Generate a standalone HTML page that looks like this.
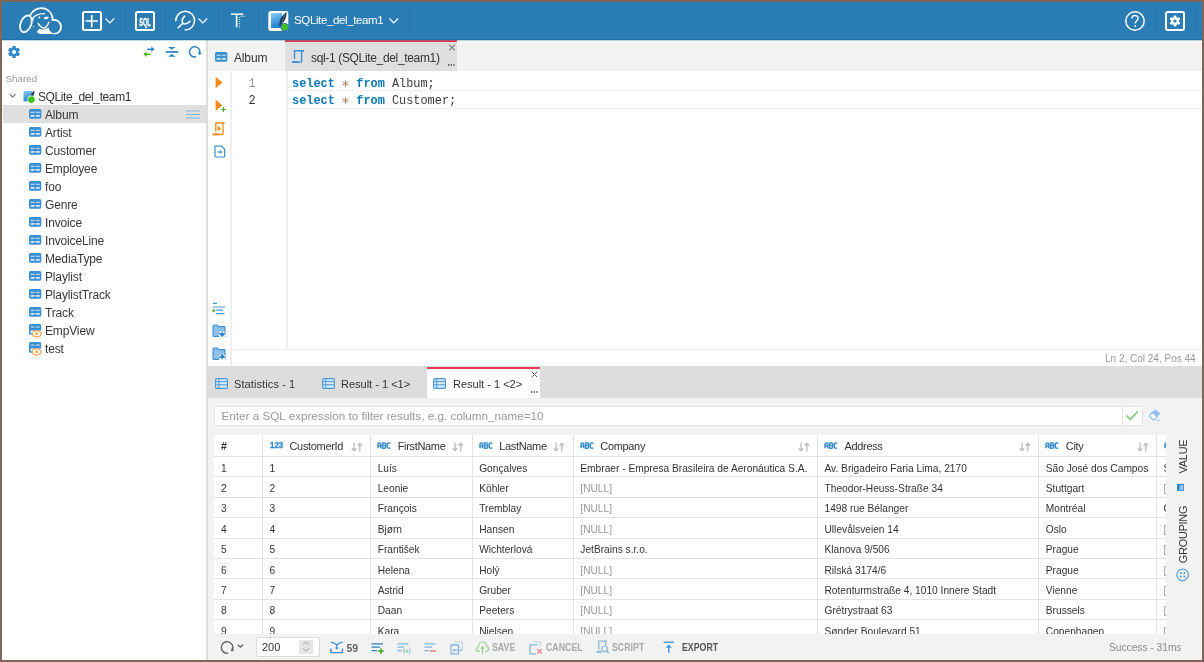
<!DOCTYPE html>
<html><head><meta charset="utf-8">
<style>
*{box-sizing:border-box;margin:0;padding:0}
html,body{width:1204px;height:662px;overflow:hidden;background:#806658;font-family:"Liberation Sans",sans-serif;color:#333;position:relative}
.a{position:absolute}
.t{position:absolute;white-space:nowrap;line-height:1}
#root{position:absolute;left:0;top:0;width:1204px;height:662px;will-change:transform}
svg{position:absolute;overflow:visible}
.sep{position:absolute;top:8px;width:1px;height:25px;background:#2672a8}
.node{position:absolute;left:2px;width:204px;height:18px}
.node svg{left:27px;top:4.6px}
.node .tx{position:absolute;left:43px;top:3px;font-size:12px;letter-spacing:-0.15px;color:#333;white-space:nowrap;line-height:12px}
.code{font-family:"Liberation Mono",monospace;font-size:11.9px;white-space:pre;position:absolute;line-height:16px;color:#3c3c3c}
.kw{color:#0b78b6;font-weight:bold}
.op{color:#b07a45}
.cell{position:absolute;font-size:10.2px;white-space:nowrap;color:#333;line-height:12px}
.null{color:#999}
.vl{position:absolute;width:1px;background:#e3e3e3}
.hl{position:absolute;height:1px;background:#e3e3e3}
.tb{position:absolute;font-size:10px;font-weight:bold;color:#aaa;white-space:nowrap;line-height:10px;top:642.5px;transform:scaleX(0.88);transform-origin:0 0}
</style></head><body><div id="root">
<!-- app bg -->
<div class="a" style="left:2px;top:2px;width:1200px;height:658px;background:#f2f2f2"></div>
<!-- HEADER -->
<div class="a" style="left:2px;top:2px;width:1200px;height:38px;background:#2a7cb4;border-bottom:1px solid #1f6da8"></div>
<!-- logo -->
<svg style="left:16px;top:4px" width="50" height="34" viewBox="0 0 50 34">
 <g fill="none" stroke="#fff" stroke-width="1.8" stroke-linecap="round">
  <ellipse cx="9.9" cy="19.8" rx="5.3" ry="8.7" transform="rotate(22 9.9 19.8)"/>
  <path d="M14.2,11.2 C17,6.2 21,4.2 25.5,4.2 C31.5,4.2 36,8.5 37,16"/>
  <path d="M36.2,16.2 C41,14.8 45,18.5 45,23 C45,27 42,29.6 38.5,29.6"/>
  <path d="M15.5,15.5 C18.5,11.2 22,9.3 28.5,9.6" stroke-width="1.2"/>
  <path d="M22.2,19.6 C24,22.5 26.5,24.2 28.8,24 C30.5,23 32,21 32.8,18.4" stroke-width="1.5"/>
 </g>
 <g fill="#fff">
  <path d="M21.2,27 C21,29 22.8,30 25,30 L39.5,30 C36,29.5 33.5,27.5 32.3,23.5 C30,25.5 26.5,26.2 23.5,24.8 Z"/>
  <path d="M22,13.4 L23.5,12.2 L24.6,13.6 L23,14.6 Z"/>
  <path d="M27.6,14 C28.5,12.6 31,12.3 32.9,13 C32.2,14.8 30.2,15.6 29,15.2 Z"/>
  <path d="M15,14.5 L17.8,13.6 L17.4,17.5 Z"/>
  <path d="M17.2,21.5 L18.4,23.6 L16.8,23 Z"/>
 </g>
</svg>
<!-- plus box -->
<svg style="left:82px;top:11px" width="20" height="20" viewBox="0 0 20 20">
 <rect x="1" y="1" width="18" height="18" rx="1.5" fill="none" stroke="#fff" stroke-width="2"/>
 <path d="M3.5,10 H16 M9.7,4 V16.3" stroke="#fff" stroke-width="1.7"/>
</svg>
<svg style="left:105px;top:18px" width="10" height="6" viewBox="0 0 10 6"><path d="M0.5,0.5 L4.8,5 L9.2,0.5" fill="none" stroke="#fff" stroke-width="1.1"/></svg>
<div class="sep" style="left:125px"></div>
<!-- SQL box -->
<svg style="left:135px;top:11px" width="20" height="20" viewBox="0 0 20 20">
 <rect x="1" y="1" width="18" height="18" rx="1.5" fill="none" stroke="#fff" stroke-width="2"/>
 <text x="10" y="14.6" text-anchor="middle" font-family="Liberation Sans" font-weight="bold" font-size="11" fill="#fff" stroke="#fff" stroke-width="0.35" textLength="11.6" lengthAdjust="spacingAndGlyphs">SQL</text>
</svg>
<div class="sep" style="left:165px"></div>
<!-- search/wrench -->
<svg style="left:174px;top:10px" width="22" height="22" viewBox="0 0 22 22">
 <g fill="none" stroke="#fff" stroke-width="1.6" stroke-linecap="round">
  <path d="M1.8,10.6 A9.4,9.4 0 1 1 11.2,20"/>
  <path d="M4.2,17.8 L8.7,13.2"/>
  <path d="M10.7,6.2 Q7,9.5 8.7,13.2 Q11.5,15.5 16,11.4"/>
 </g>
</svg>
<svg style="left:198px;top:18px" width="10" height="6" viewBox="0 0 10 6"><path d="M0.5,0.5 L4.8,5 L9.2,0.5" fill="none" stroke="#fff" stroke-width="1.1"/></svg>
<div class="sep" style="left:218px"></div>
<!-- T icon -->
<svg style="left:230px;top:12px" width="16" height="17" viewBox="0 0 16 17">
 <rect x="1" y="1.4" width="12.3" height="1.5" fill="#f4f8fb"/>
 <rect x="5.8" y="2.9" width="1.7" height="12.4" fill="#f4f8fb"/>
 <path d="M9.6,5 V16" stroke="#fff" stroke-width="0.9" stroke-dasharray="0.9 1.1"/>
 <path d="M10.5,4.2 H15" stroke="#fff" stroke-width="0.9" stroke-dasharray="1 0.6"/>
</svg>
<div class="sep" style="left:258px"></div>
<!-- db icon -->
<svg style="left:268px;top:11px" width="22" height="22" viewBox="0 0 22 22">
 <defs><linearGradient id="gdb" x1="0" y1="0" x2="0.3" y2="1"><stop offset="0" stop-color="#8fd0f5"/><stop offset="1" stop-color="#1a7fd0"/></linearGradient></defs>
 <rect x="0.3" y="0" width="20" height="20" rx="2.2" fill="#fff"/>
 <rect x="3" y="2" width="11" height="15" fill="url(#gdb)"/>
 <path d="M11.3,14.5 C11.3,9 13.8,4 18.5,1.3 C19,5.8 16.2,11.5 12.2,15 Z" fill="#1b3a58"/>
 <path d="M13.3,14 C14.5,9 16,5 17.6,3" stroke="#8ab" stroke-width="0.5" fill="none"/>
 <circle cx="16.7" cy="16.3" r="4.2" fill="#2a6fb0"/>
 <circle cx="16.7" cy="16.3" r="3.3" fill="#44c21e"/>
</svg>
<div class="t" style="left:294px;top:14px;font-size:11.5px;color:#fff;letter-spacing:-0.37px;line-height:12px">SQLite_del_team1</div>
<svg style="left:389px;top:18px" width="10" height="6" viewBox="0 0 10 6"><path d="M0.5,0.5 L4.8,5 L9.2,0.5" fill="none" stroke="#fff" stroke-width="1.1"/></svg>
<div class="sep" style="left:409px"></div>
<!-- help -->
<svg style="left:1125px;top:11px" width="20" height="20" viewBox="0 0 20 20">
 <circle cx="10" cy="10" r="9.2" fill="none" stroke="#fff" stroke-width="1.5"/>
 <path d="M6.9,7.6 C6.9,5.6 8.3,4.5 10,4.5 C11.8,4.5 13.1,5.7 13.1,7.3 C13.1,9.6 10.2,9.9 10.2,12.6" fill="none" stroke="#fff" stroke-width="1.4"/>
 <rect x="9.4" y="14.2" width="1.6" height="1.6" fill="#fff"/>
</svg>
<div class="sep" style="left:1155px"></div>
<!-- settings -->
<svg style="left:1165px;top:11px" width="20" height="20" viewBox="0 0 20 20">
 <rect x="1" y="1" width="18" height="18" rx="1.5" fill="none" stroke="#fff" stroke-width="1.9"/>
 <g transform="translate(10,10)" fill="#fff">
  <circle r="3.9"/>
  <rect x="-1.35" y="-5.5" width="2.7" height="2.7" rx="0.4" transform="rotate(0)"/><rect x="-1.35" y="-5.5" width="2.7" height="2.7" rx="0.4" transform="rotate(60)"/><rect x="-1.35" y="-5.5" width="2.7" height="2.7" rx="0.4" transform="rotate(120)"/><rect x="-1.35" y="-5.5" width="2.7" height="2.7" rx="0.4" transform="rotate(180)"/><rect x="-1.35" y="-5.5" width="2.7" height="2.7" rx="0.4" transform="rotate(240)"/><rect x="-1.35" y="-5.5" width="2.7" height="2.7" rx="0.4" transform="rotate(300)"/>
  <circle r="1.6" fill="#2a7cb4"/>
 </g>
</svg>
<div class="sep" style="left:1195px"></div>

<!-- SIDEBAR -->
<div class="a" style="left:2px;top:40px;width:204px;height:620px;background:#fff"></div>
<div class="a" style="left:206px;top:40px;width:2px;height:620px;background:#dddddd"></div>
<!-- gear -->
<svg style="left:6.6px;top:45px" width="14" height="14" viewBox="-7 -7 14 14">
 <g fill="#2f89cc">
  <circle r="4.4"/>
  <rect x="-1.7" y="-6" width="3.4" height="3" rx="0.6" transform="rotate(0)"/><rect x="-1.7" y="-6" width="3.4" height="3" rx="0.6" transform="rotate(60)"/><rect x="-1.7" y="-6" width="3.4" height="3" rx="0.6" transform="rotate(120)"/><rect x="-1.7" y="-6" width="3.4" height="3" rx="0.6" transform="rotate(180)"/><rect x="-1.7" y="-6" width="3.4" height="3" rx="0.6" transform="rotate(240)"/><rect x="-1.7" y="-6" width="3.4" height="3" rx="0.6" transform="rotate(300)"/>
 </g>
 <circle r="2" fill="#fff"/>
</svg>
<!-- swap -->
<svg style="left:142px;top:45px" width="14" height="13" viewBox="0 0 14 13">
 <path d="M5.3,4.3 H10.5" stroke="#2a84c6" stroke-width="1.6"/>
 <path d="M9.3,1.4 L12.6,4.3 L9.3,7 Z" fill="#2a84c6"/>
 <path d="M8.5,9.3 H3.2" stroke="#4cba1e" stroke-width="1.6"/>
 <path d="M4.6,6.6 L1.3,9.3 L4.6,12.1 Z" fill="#4cba1e"/>
</svg>
<!-- collapse -->
<svg style="left:165px;top:46px" width="14" height="12" viewBox="0 0 14 12">
 <path d="M3,1 H10.5 L6.75,3.8 Z" fill="#2a84c6"/>
 <rect x="1" y="5" width="12" height="1.8" fill="#2a84c6"/>
 <path d="M3,10.8 H10.5 L6.75,8 Z" fill="#2a84c6"/>
</svg>
<!-- refresh -->
<svg style="left:188px;top:45px" width="14" height="14" viewBox="0 0 14 14">
 <path d="M8.05,11.92 A5.2,5.2 0 1 1 11.72,8.25" fill="none" stroke="#2a84c6" stroke-width="1.5"/><path d="M11.18,10.27 L13.91,8.21 L9.85,7.12 Z" fill="#2a84c6"/>
</svg>
<div class="t" style="left:5.5px;top:74px;font-size:9.9px;color:#999;line-height:10px">Shared</div>
<svg style="left:9px;top:93px" width="8" height="6" viewBox="0 0 8 6"><path d="M0.6,0.8 L3.6,4.2 L6.6,0.8" fill="none" stroke="#777" stroke-width="1.1"/></svg>
<svg style="left:23px;top:90px" width="14" height="14" viewBox="0 0 14 14">
 <defs><linearGradient id="gdb2" x1="0" y1="0" x2="0.3" y2="1"><stop offset="0" stop-color="#8fd0f5"/><stop offset="1" stop-color="#1a7fd0"/></linearGradient></defs>
 <rect x="0.5" y="1" width="8.5" height="10.3" fill="url(#gdb2)"/>
 <path d="M7.2,8.8 C7.3,5.3 8.8,2.4 11.4,0.5 C11.8,3.3 10.4,6.6 8.2,9.2 Z" fill="#1b3a58"/>
 <circle cx="8.4" cy="9.6" r="4" fill="#fff"/>
 <circle cx="8.4" cy="9.6" r="3.4" fill="#44c21e"/>
</svg>
<div class="t" style="left:38px;top:91px;font-size:12px;color:#333;letter-spacing:-0.4px;line-height:12px">SQLite_del_team1</div>
<!-- highlight -->
<div class="a" style="left:3px;top:105px;width:203px;height:18px;background:#dfdfdf"></div>
<svg style="left:186px;top:109.5px" width="14" height="10" viewBox="0 0 14 10"><path d="M0,1 H14 M0,4.5 H14 M0,8 H14" stroke="#82b4dc" stroke-width="1"/></svg>
<svg style="left:29px;top:109.2px" width="12.5" height="10" viewBox="0 0 12.5 10"><rect x="0" y="0" width="12.3" height="9.7" rx="1.6" fill="#3a8fd1"/><rect x="1.6" y="2.7" width="4" height="1.4" fill="#a9d2f2"/><rect x="6.8" y="2.7" width="4" height="1.4" fill="#a9d2f2"/><rect x="1.6" y="6.2" width="4" height="1.4" fill="#fff"/><rect x="6.8" y="6.2" width="4" height="1.4" fill="#fff"/></svg>
<div class="t" style="left:45px;top:108.5px;font-size:12px;color:#383838;letter-spacing:-0.15px;line-height:12px">Album</div>
<svg style="left:29px;top:127.2px" width="12.5" height="10" viewBox="0 0 12.5 10"><rect x="0" y="0" width="12.3" height="9.7" rx="1.6" fill="#3a8fd1"/><rect x="1.6" y="2.7" width="4" height="1.4" fill="#a9d2f2"/><rect x="6.8" y="2.7" width="4" height="1.4" fill="#a9d2f2"/><rect x="1.6" y="6.2" width="4" height="1.4" fill="#fff"/><rect x="6.8" y="6.2" width="4" height="1.4" fill="#fff"/></svg>
<div class="t" style="left:45px;top:126.5px;font-size:12px;color:#383838;letter-spacing:-0.15px;line-height:12px">Artist</div>
<svg style="left:29px;top:145.2px" width="12.5" height="10" viewBox="0 0 12.5 10"><rect x="0" y="0" width="12.3" height="9.7" rx="1.6" fill="#3a8fd1"/><rect x="1.6" y="2.7" width="4" height="1.4" fill="#a9d2f2"/><rect x="6.8" y="2.7" width="4" height="1.4" fill="#a9d2f2"/><rect x="1.6" y="6.2" width="4" height="1.4" fill="#fff"/><rect x="6.8" y="6.2" width="4" height="1.4" fill="#fff"/></svg>
<div class="t" style="left:45px;top:144.5px;font-size:12px;color:#383838;letter-spacing:-0.15px;line-height:12px">Customer</div>
<svg style="left:29px;top:163.2px" width="12.5" height="10" viewBox="0 0 12.5 10"><rect x="0" y="0" width="12.3" height="9.7" rx="1.6" fill="#3a8fd1"/><rect x="1.6" y="2.7" width="4" height="1.4" fill="#a9d2f2"/><rect x="6.8" y="2.7" width="4" height="1.4" fill="#a9d2f2"/><rect x="1.6" y="6.2" width="4" height="1.4" fill="#fff"/><rect x="6.8" y="6.2" width="4" height="1.4" fill="#fff"/></svg>
<div class="t" style="left:45px;top:162.5px;font-size:12px;color:#383838;letter-spacing:-0.15px;line-height:12px">Employee</div>
<svg style="left:29px;top:181.2px" width="12.5" height="10" viewBox="0 0 12.5 10"><rect x="0" y="0" width="12.3" height="9.7" rx="1.6" fill="#3a8fd1"/><rect x="1.6" y="2.7" width="4" height="1.4" fill="#a9d2f2"/><rect x="6.8" y="2.7" width="4" height="1.4" fill="#a9d2f2"/><rect x="1.6" y="6.2" width="4" height="1.4" fill="#fff"/><rect x="6.8" y="6.2" width="4" height="1.4" fill="#fff"/></svg>
<div class="t" style="left:45px;top:180.5px;font-size:12px;color:#383838;letter-spacing:-0.15px;line-height:12px">foo</div>
<svg style="left:29px;top:199.2px" width="12.5" height="10" viewBox="0 0 12.5 10"><rect x="0" y="0" width="12.3" height="9.7" rx="1.6" fill="#3a8fd1"/><rect x="1.6" y="2.7" width="4" height="1.4" fill="#a9d2f2"/><rect x="6.8" y="2.7" width="4" height="1.4" fill="#a9d2f2"/><rect x="1.6" y="6.2" width="4" height="1.4" fill="#fff"/><rect x="6.8" y="6.2" width="4" height="1.4" fill="#fff"/></svg>
<div class="t" style="left:45px;top:198.5px;font-size:12px;color:#383838;letter-spacing:-0.15px;line-height:12px">Genre</div>
<svg style="left:29px;top:217.2px" width="12.5" height="10" viewBox="0 0 12.5 10"><rect x="0" y="0" width="12.3" height="9.7" rx="1.6" fill="#3a8fd1"/><rect x="1.6" y="2.7" width="4" height="1.4" fill="#a9d2f2"/><rect x="6.8" y="2.7" width="4" height="1.4" fill="#a9d2f2"/><rect x="1.6" y="6.2" width="4" height="1.4" fill="#fff"/><rect x="6.8" y="6.2" width="4" height="1.4" fill="#fff"/></svg>
<div class="t" style="left:45px;top:216.5px;font-size:12px;color:#383838;letter-spacing:-0.15px;line-height:12px">Invoice</div>
<svg style="left:29px;top:235.2px" width="12.5" height="10" viewBox="0 0 12.5 10"><rect x="0" y="0" width="12.3" height="9.7" rx="1.6" fill="#3a8fd1"/><rect x="1.6" y="2.7" width="4" height="1.4" fill="#a9d2f2"/><rect x="6.8" y="2.7" width="4" height="1.4" fill="#a9d2f2"/><rect x="1.6" y="6.2" width="4" height="1.4" fill="#fff"/><rect x="6.8" y="6.2" width="4" height="1.4" fill="#fff"/></svg>
<div class="t" style="left:45px;top:234.5px;font-size:12px;color:#383838;letter-spacing:-0.15px;line-height:12px">InvoiceLine</div>
<svg style="left:29px;top:253.2px" width="12.5" height="10" viewBox="0 0 12.5 10"><rect x="0" y="0" width="12.3" height="9.7" rx="1.6" fill="#3a8fd1"/><rect x="1.6" y="2.7" width="4" height="1.4" fill="#a9d2f2"/><rect x="6.8" y="2.7" width="4" height="1.4" fill="#a9d2f2"/><rect x="1.6" y="6.2" width="4" height="1.4" fill="#fff"/><rect x="6.8" y="6.2" width="4" height="1.4" fill="#fff"/></svg>
<div class="t" style="left:45px;top:252.5px;font-size:12px;color:#383838;letter-spacing:-0.15px;line-height:12px">MediaType</div>
<svg style="left:29px;top:271.2px" width="12.5" height="10" viewBox="0 0 12.5 10"><rect x="0" y="0" width="12.3" height="9.7" rx="1.6" fill="#3a8fd1"/><rect x="1.6" y="2.7" width="4" height="1.4" fill="#a9d2f2"/><rect x="6.8" y="2.7" width="4" height="1.4" fill="#a9d2f2"/><rect x="1.6" y="6.2" width="4" height="1.4" fill="#fff"/><rect x="6.8" y="6.2" width="4" height="1.4" fill="#fff"/></svg>
<div class="t" style="left:45px;top:270.5px;font-size:12px;color:#383838;letter-spacing:-0.15px;line-height:12px">Playlist</div>
<svg style="left:29px;top:289.2px" width="12.5" height="10" viewBox="0 0 12.5 10"><rect x="0" y="0" width="12.3" height="9.7" rx="1.6" fill="#3a8fd1"/><rect x="1.6" y="2.7" width="4" height="1.4" fill="#a9d2f2"/><rect x="6.8" y="2.7" width="4" height="1.4" fill="#a9d2f2"/><rect x="1.6" y="6.2" width="4" height="1.4" fill="#fff"/><rect x="6.8" y="6.2" width="4" height="1.4" fill="#fff"/></svg>
<div class="t" style="left:45px;top:288.5px;font-size:12px;color:#383838;letter-spacing:-0.15px;line-height:12px">PlaylistTrack</div>
<svg style="left:29px;top:307.2px" width="12.5" height="10" viewBox="0 0 12.5 10"><rect x="0" y="0" width="12.3" height="9.7" rx="1.6" fill="#3a8fd1"/><rect x="1.6" y="2.7" width="4" height="1.4" fill="#a9d2f2"/><rect x="6.8" y="2.7" width="4" height="1.4" fill="#a9d2f2"/><rect x="1.6" y="6.2" width="4" height="1.4" fill="#fff"/><rect x="6.8" y="6.2" width="4" height="1.4" fill="#fff"/></svg>
<div class="t" style="left:45px;top:306.5px;font-size:12px;color:#383838;letter-spacing:-0.15px;line-height:12px">Track</div>
<svg style="left:28.6px;top:323.8px" width="14" height="14" viewBox="0 0 14 14"><path d="M0,1.6 Q0,0 1.6,0 H10.6 Q12.2,0 12.2,1.6 V6.4 H1.6 V8.6 Q1.6,9.4 2.6,9.4 H3.5 V10.8 H1.6 Q0,10.8 0,9.2 Z" fill="#3a8fd1"/><rect x="1.6" y="2.4" width="4" height="1.3" fill="#a9d2f2"/><rect x="6.8" y="2.4" width="4" height="1.3" fill="#a9d2f2"/><ellipse cx="7.7" cy="9.8" rx="4.4" ry="3.1" fill="#fff" stroke="#f39a3a" stroke-width="1.1"/><circle cx="7.7" cy="9.8" r="1.3" fill="#f39a3a"/></svg>
<div class="t" style="left:45px;top:324.5px;font-size:12px;color:#383838;letter-spacing:-0.15px;line-height:12px">EmpView</div>
<svg style="left:28.6px;top:341.8px" width="14" height="14" viewBox="0 0 14 14"><path d="M0,1.6 Q0,0 1.6,0 H10.6 Q12.2,0 12.2,1.6 V6.4 H1.6 V8.6 Q1.6,9.4 2.6,9.4 H3.5 V10.8 H1.6 Q0,10.8 0,9.2 Z" fill="#3a8fd1"/><rect x="1.6" y="2.4" width="4" height="1.3" fill="#a9d2f2"/><rect x="6.8" y="2.4" width="4" height="1.3" fill="#a9d2f2"/><ellipse cx="7.7" cy="9.8" rx="4.4" ry="3.1" fill="#fff" stroke="#f39a3a" stroke-width="1.1"/><circle cx="7.7" cy="9.8" r="1.3" fill="#f39a3a"/></svg>
<div class="t" style="left:45px;top:342.5px;font-size:12px;color:#383838;letter-spacing:-0.15px;line-height:12px">test</div>
<!-- EDITOR TABS -->
<div class="a" style="left:208px;top:40px;width:994px;height:31px;background:#f2f2f2"></div>
<div class="a" style="left:208px;top:41px;width:994px;height:1px;background:#fcfaf8"></div>
<svg style="left:215px;top:51.5px" width="12.5" height="10" viewBox="0 0 12.5 10"><rect x="0" y="0" width="12.3" height="9.7" rx="1.6" fill="#3a8fd1"/><rect x="1.6" y="2.7" width="4" height="1.4" fill="#a9d2f2"/><rect x="6.8" y="2.7" width="4" height="1.4" fill="#a9d2f2"/><rect x="1.6" y="6.2" width="4" height="1.4" fill="#fff"/><rect x="6.8" y="6.2" width="4" height="1.4" fill="#fff"/></svg>
<div class="t" style="left:234px;top:52px;font-size:12px;color:#333;letter-spacing:-0.15px;line-height:12px">Album</div>
<div class="a" style="left:285px;top:40px;width:172px;height:31px;background:#dfdfdf;border-top:2px solid #e33d4e"></div>
<svg style="left:291px;top:49px" width="14" height="15" viewBox="0 0 14 15">
 <path d="M3.5,10 V1.8 H12.4 M10.6,1.8 V12.2 Q10.6,13.1 9.7,13.1 H1.3" fill="none" stroke="#3d8fd6" stroke-width="1.4"/>
 <circle cx="12.2" cy="2" r="1" fill="#3d8fd6"/>
 <rect x="1.2" y="12.2" width="6" height="1.8" fill="#3d8fd6"/>
</svg>
<div class="t" style="left:311px;top:52px;font-size:12px;color:#333;letter-spacing:-0.34px;line-height:12px">sql-1 (SQLite_del_team1)</div>
<svg style="left:447.5px;top:44px" width="8" height="7" viewBox="0 0 8 7"><path d="M1,0.6 L7,6.4 M7,0.6 L1,6.4" stroke="#555" stroke-width="1"/></svg>
<svg style="left:448px;top:64px" width="7" height="2" viewBox="0 0 7 2"><path d="M0,1 H1.4 M2.6,1 H4 M5.2,1 H6.6" stroke="#444" stroke-width="1.4"/></svg>
<!-- EDITOR -->
<div class="a" style="left:208px;top:71px;width:994px;height:295px;background:#fff"></div>
<div class="a" style="left:230px;top:71px;width:2px;height:295px;background:#efefef"></div>
<div class="a" style="left:286px;top:71px;width:2px;height:278px;background:#efefef"></div>
<div class="a" style="left:288px;top:89.5px;width:914px;height:1px;background:#f0f0f0"></div>
<div class="a" style="left:288px;top:107.5px;width:914px;height:1px;background:#f0f0f0"></div>
<div class="code" style="left:248.5px;top:76px;color:#999">1</div>
<div class="code" style="left:248.5px;top:92.5px;color:#333">2</div>
<div class="code" style="left:292px;top:76px"><span class="kw">select</span>   <span class="kw">from</span> Album;</div>
<div class="code" style="left:292px;top:92.5px"><span class="kw">select</span>   <span class="kw">from</span> Customer;</div>
<svg style="left:341.8px;top:79.9px" width="7" height="7" viewBox="0 0 7 7"><g stroke="#bb8c6a" stroke-width="1" stroke-linecap="round"><path d="M3.5,0.5 V6.5"/><path d="M0.9,2 L6.1,5"/><path d="M6.1,2 L0.9,5"/></g></svg>
<svg style="left:341.8px;top:96.60000000000001px" width="7" height="7" viewBox="0 0 7 7"><g stroke="#bb8c6a" stroke-width="1" stroke-linecap="round"><path d="M3.5,0.5 V6.5"/><path d="M0.9,2 L6.1,5"/><path d="M6.1,2 L0.9,5"/></g></svg>
<div class="a" style="left:232px;top:348.5px;width:970px;height:1px;background:#ececec"></div>
<div class="t" style="left:1105px;top:353.5px;font-size:10px;color:#999;line-height:10px">Ln 2, Col 24, Pos 44</div>
<!-- gutter icons -->
<svg style="left:215px;top:76px" width="8" height="13" viewBox="0 0 8 13"><path d="M0.6,0.8 L7.4,6.5 L0.6,12.2 Z" fill="#f38b1a"/></svg>
<svg style="left:215px;top:99px" width="12" height="14" viewBox="0 0 12 14"><path d="M0.6,0.5 L7.2,6.3 L0.6,12.1 Z" fill="#f38b1a"/><path d="M8.4,8 V13 M5.9,10.5 H10.9" stroke="#4cb02a" stroke-width="1.2"/></svg>
<svg style="left:212px;top:121px" width="14" height="15" viewBox="0 0 14 15">
 <path d="M3.8,10.5 V2 H12.6 M11,2 V12.5 Q11,13.5 10,13.5 H1" fill="none" stroke="#f38b1a" stroke-width="1.3"/>
 <rect x="0.8" y="12.4" width="6" height="1.8" fill="#f38b1a"/>
 <path d="M5.5,4.6 L9,7.5 L5.5,10.3 Z" fill="#f38b1a"/>
</svg>
<svg style="left:213.5px;top:145px" width="12" height="13" viewBox="0 0 12 13">
 <path d="M1,1.2 H7.5 L10.6,4.3 V11.2 Q10.6,12 9.8,12 H1.8 Q1,12 1,11.2 Z" fill="none" stroke="#3d8fd6" stroke-width="1.2"/>
 <path d="M3.4,7 H7.4" stroke="#3d8fd6" stroke-width="1.2"/><path d="M6.2,5.1 L8.4,7 L6.2,8.9 Z" fill="#3d8fd6"/>
</svg>
<svg style="left:212px;top:301px" width="14" height="15" viewBox="0 0 14 15">
 <path d="M1,2.3 H5 M1,6 H13 M4,9.2 H11 M4,12.6 H12.5" stroke="#4a98d8" stroke-width="1.2"/>
 <path d="M0.6,7.4 L3.8,9.6 L0.6,11.8 Z" fill="#4cb02a"/>
</svg>
<svg style="left:212px;top:324px" width="14" height="14" viewBox="0 0 14 14">
 <path d="M1,2 Q1,1 2,1 H5.2 L6.6,2.6 H12.3 Q13,2.6 13,3.4 V12.4 H2 Q1,12.4 1,11.4 Z" fill="#8cc0ea" stroke="#3d8fd6" stroke-width="1.1"/>
 <circle cx="10.2" cy="10.6" r="3.4" fill="#fff"/>
 <path d="M10.2,7.6 V11.6 M8,9.6 L10.2,12.2 L12.4,9.6 Z" stroke="#2f86d0" stroke-width="1.3" fill="#2f86d0"/>
</svg>
<svg style="left:212px;top:347px" width="14" height="14" viewBox="0 0 14 14">
 <path d="M1,2 Q1,1 2,1 H5.2 L6.6,2.6 H12.3 Q13,2.6 13,3.4 V12.4 H2 Q1,12.4 1,11.4 Z" fill="#8cc0ea" stroke="#3d8fd6" stroke-width="1.1"/>
 <circle cx="10.2" cy="10.6" r="3.4" fill="#fff"/>
 <path d="M10.2,12.6 V8.6 M8,10.4 L10.2,7.8 L12.4,10.4 Z" stroke="#2f86d0" stroke-width="1.3" fill="#2f86d0"/>
</svg>

<!--RESULTS--><div class="a" style="left:208px;top:366px;width:994px;height:32px;background:#dddddd"></div>
<div class="a" style="left:208px;top:398px;width:994px;height:262px;background:#f2f2f2"></div>
<svg style="left:214.5px;top:378px" width="13" height="11" viewBox="0 0 13 11"><rect x="0.6" y="0.6" width="11.8" height="9.8" rx="1" fill="#d9ebf8" stroke="#4a98d8" stroke-width="1.1"/><path d="M0.6,3.6 H12.4 M0.6,6.8 H12.4 M3.8,0.6 V10.4" stroke="#4a98d8" stroke-width="1"/></svg>
<div class="t" style="left:234px;top:379px;font-size:11px;letter-spacing:0.1px;color:#333;line-height:11px">Statistics - 1</div>
<svg style="left:321.5px;top:378px" width="13" height="11" viewBox="0 0 13 11"><rect x="0.6" y="0.6" width="11.8" height="9.8" rx="1" fill="#d9ebf8" stroke="#4a98d8" stroke-width="1.1"/><path d="M0.6,3.6 H12.4 M0.6,6.8 H12.4 M3.8,0.6 V10.4" stroke="#4a98d8" stroke-width="1"/></svg>
<div class="t" style="left:341px;top:379px;font-size:11px;color:#333;line-height:11px">Result - 1 &lt;1&gt;</div>
<div class="a" style="left:426.5px;top:367px;width:113.5px;height:31px;background:#fff;border-top:2px solid #e33d4e"></div>
<svg style="left:433px;top:378px" width="13" height="11" viewBox="0 0 13 11"><rect x="0.6" y="0.6" width="11.8" height="9.8" rx="1" fill="#d9ebf8" stroke="#4a98d8" stroke-width="1.1"/><path d="M0.6,3.6 H12.4 M0.6,6.8 H12.4 M3.8,0.6 V10.4" stroke="#4a98d8" stroke-width="1"/></svg>
<div class="t" style="left:453px;top:379px;font-size:11px;color:#333;line-height:11px">Result - 1 &lt;2&gt;</div>
<svg style="left:530.5px;top:371px" width="7" height="7" viewBox="0 0 7 7"><path d="M0.8,0.8 L6.2,6.2 M6.2,0.8 L0.8,6.2" stroke="#555" stroke-width="1"/></svg>
<svg style="left:531px;top:391px" width="7" height="2" viewBox="0 0 7 2"><path d="M0,1 H1.4 M2.6,1 H4 M5.2,1 H6.6" stroke="#444" stroke-width="1.4"/></svg>
<div class="a" style="left:214px;top:406px;width:929px;height:20px;background:#fff;border:1px solid #e2e2e2;border-radius:2px"></div>
<div class="a" style="left:1122px;top:407px;width:1px;height:18px;background:#e2e2e2"></div>
<div class="t" style="left:221.5px;top:410px;font-size:11.7px;color:#999;line-height:11px">Enter a SQL expression to filter results, e.g. column_name=10</div>
<svg style="left:1125px;top:409px" width="14" height="13" viewBox="0 0 14 13"><path d="M1.5,6.5 L5.2,10.5 L12.8,2.5" fill="none" stroke="#80cc80" stroke-width="1.8"/></svg>
<svg style="left:1148px;top:408px" width="14" height="14" viewBox="0 0 14 14"><path d="M7.5,1.2 L12.2,5.7 L7,10.8 L2.4,6.3 Z" fill="#8ec2ec"/><path d="M4.6,4.2 L9.3,8.6 L6.3,11.5 Q5.6,12.1 4.9,11.5 L1.8,8.5 Q1.2,7.8 1.8,7.1 Z" fill="#fff" stroke="#8ec2ec" stroke-width="1.2"/><path d="M8.5,12.4 H11.5" stroke="#8ec2ec" stroke-width="1"/></svg>
<div class="a" style="left:214px;top:434.5px;width:952px;height:199.5px;background:#fff;border-radius:3px;overflow:hidden" id="tbl"></div>
<div class="vl" style="left:262.0px;top:434.5px;height:199.5px"></div>
<div class="vl" style="left:370.2px;top:434.5px;height:199.5px"></div>
<div class="vl" style="left:471.7px;top:434.5px;height:199.5px"></div>
<div class="vl" style="left:572.8px;top:434.5px;height:199.5px"></div>
<div class="vl" style="left:817.0px;top:434.5px;height:199.5px"></div>
<div class="vl" style="left:1038.3px;top:434.5px;height:199.5px"></div>
<div class="vl" style="left:1156.0px;top:434.5px;height:199.5px"></div>
<div class="hl" style="left:214px;top:456.0px;width:952px"></div>
<div class="hl" style="left:214px;top:476.40px;width:952px"></div>
<div class="hl" style="left:214px;top:496.80px;width:952px"></div>
<div class="hl" style="left:214px;top:517.20px;width:952px"></div>
<div class="hl" style="left:214px;top:537.60px;width:952px"></div>
<div class="hl" style="left:214px;top:558.00px;width:952px"></div>
<div class="hl" style="left:214px;top:578.40px;width:952px"></div>
<div class="hl" style="left:214px;top:598.80px;width:952px"></div>
<div class="hl" style="left:214px;top:619.20px;width:952px"></div>
<div class="t" style="left:221px;top:440.5px;font-size:10.5px;font-weight:bold;color:#333;line-height:11px">#</div>
<svg style="left:269.5px;top:442px" width="14" height="7" viewBox="0 0 14 7"><text x="0" y="6.3" font-family="Liberation Sans" font-weight="bold" font-size="8.6" fill="#3a8fd1" stroke="#3a8fd1" stroke-width="0.35" textLength="13.3" lengthAdjust="spacingAndGlyphs">123</text></svg>
<div class="t" style="left:289.5px;top:440.5px;font-size:11px;letter-spacing:-0.33px;color:#333;line-height:11px">CustomerId</div>
<svg style="left:350.7px;top:441.5px" width="12" height="10" viewBox="0 0 12 10"><path d="M3,0.5 V8.5 M0.8,6.3 L3,8.8 L5.2,6.3" fill="none" stroke="#bdbdbd" stroke-width="1.35"/><path d="M8.8,9.5 V1.5 M6.6,3.7 L8.8,1.2 L11,3.7" fill="none" stroke="#bdbdbd" stroke-width="1.35"/></svg>
<svg style="left:377.2px;top:442px" width="14" height="7" viewBox="0 0 14 7"><g fill="none" stroke="#3a8fd1" stroke-width="1.5"><path d="M1,6.2 V2.4 Q1,1 2.4,1 Q3.8,1 3.8,2.4 V6.2 M1,4 H3.8"/><path d="M5.6,1 H7.4 Q8.7,1 8.7,2.3 V4.9 Q8.7,6.2 7.4,6.2 H5.6 Z M5.6,3.6 H8"/><path d="M13.1,1.6 Q12.8,1 11.7,1 Q10.2,1 10.2,2.4 V4.8 Q10.2,6.2 11.7,6.2 Q12.8,6.2 13.1,5.6"/></g></svg>
<div class="t" style="left:397.7px;top:440.5px;font-size:11px;letter-spacing:-0.33px;color:#333;line-height:11px">FirstName</div>
<svg style="left:452.2px;top:441.5px" width="12" height="10" viewBox="0 0 12 10"><path d="M3,0.5 V8.5 M0.8,6.3 L3,8.8 L5.2,6.3" fill="none" stroke="#bdbdbd" stroke-width="1.35"/><path d="M8.8,9.5 V1.5 M6.6,3.7 L8.8,1.2 L11,3.7" fill="none" stroke="#bdbdbd" stroke-width="1.35"/></svg>
<svg style="left:478.7px;top:442px" width="14" height="7" viewBox="0 0 14 7"><g fill="none" stroke="#3a8fd1" stroke-width="1.5"><path d="M1,6.2 V2.4 Q1,1 2.4,1 Q3.8,1 3.8,2.4 V6.2 M1,4 H3.8"/><path d="M5.6,1 H7.4 Q8.7,1 8.7,2.3 V4.9 Q8.7,6.2 7.4,6.2 H5.6 Z M5.6,3.6 H8"/><path d="M13.1,1.6 Q12.8,1 11.7,1 Q10.2,1 10.2,2.4 V4.8 Q10.2,6.2 11.7,6.2 Q12.8,6.2 13.1,5.6"/></g></svg>
<div class="t" style="left:499.2px;top:440.5px;font-size:11px;letter-spacing:-0.33px;color:#333;line-height:11px">LastName</div>
<svg style="left:553.3px;top:441.5px" width="12" height="10" viewBox="0 0 12 10"><path d="M3,0.5 V8.5 M0.8,6.3 L3,8.8 L5.2,6.3" fill="none" stroke="#bdbdbd" stroke-width="1.35"/><path d="M8.8,9.5 V1.5 M6.6,3.7 L8.8,1.2 L11,3.7" fill="none" stroke="#bdbdbd" stroke-width="1.35"/></svg>
<svg style="left:579.8px;top:442px" width="14" height="7" viewBox="0 0 14 7"><g fill="none" stroke="#3a8fd1" stroke-width="1.5"><path d="M1,6.2 V2.4 Q1,1 2.4,1 Q3.8,1 3.8,2.4 V6.2 M1,4 H3.8"/><path d="M5.6,1 H7.4 Q8.7,1 8.7,2.3 V4.9 Q8.7,6.2 7.4,6.2 H5.6 Z M5.6,3.6 H8"/><path d="M13.1,1.6 Q12.8,1 11.7,1 Q10.2,1 10.2,2.4 V4.8 Q10.2,6.2 11.7,6.2 Q12.8,6.2 13.1,5.6"/></g></svg>
<div class="t" style="left:600.3px;top:440.5px;font-size:11px;letter-spacing:-0.33px;color:#333;line-height:11px">Company</div>
<svg style="left:797.5px;top:441.5px" width="12" height="10" viewBox="0 0 12 10"><path d="M3,0.5 V8.5 M0.8,6.3 L3,8.8 L5.2,6.3" fill="none" stroke="#bdbdbd" stroke-width="1.35"/><path d="M8.8,9.5 V1.5 M6.6,3.7 L8.8,1.2 L11,3.7" fill="none" stroke="#bdbdbd" stroke-width="1.35"/></svg>
<svg style="left:824.0px;top:442px" width="14" height="7" viewBox="0 0 14 7"><g fill="none" stroke="#3a8fd1" stroke-width="1.5"><path d="M1,6.2 V2.4 Q1,1 2.4,1 Q3.8,1 3.8,2.4 V6.2 M1,4 H3.8"/><path d="M5.6,1 H7.4 Q8.7,1 8.7,2.3 V4.9 Q8.7,6.2 7.4,6.2 H5.6 Z M5.6,3.6 H8"/><path d="M13.1,1.6 Q12.8,1 11.7,1 Q10.2,1 10.2,2.4 V4.8 Q10.2,6.2 11.7,6.2 Q12.8,6.2 13.1,5.6"/></g></svg>
<div class="t" style="left:844.5px;top:440.5px;font-size:11px;letter-spacing:-0.33px;color:#333;line-height:11px">Address</div>
<svg style="left:1018.8px;top:441.5px" width="12" height="10" viewBox="0 0 12 10"><path d="M3,0.5 V8.5 M0.8,6.3 L3,8.8 L5.2,6.3" fill="none" stroke="#bdbdbd" stroke-width="1.35"/><path d="M8.8,9.5 V1.5 M6.6,3.7 L8.8,1.2 L11,3.7" fill="none" stroke="#bdbdbd" stroke-width="1.35"/></svg>
<svg style="left:1045.3px;top:442px" width="14" height="7" viewBox="0 0 14 7"><g fill="none" stroke="#3a8fd1" stroke-width="1.5"><path d="M1,6.2 V2.4 Q1,1 2.4,1 Q3.8,1 3.8,2.4 V6.2 M1,4 H3.8"/><path d="M5.6,1 H7.4 Q8.7,1 8.7,2.3 V4.9 Q8.7,6.2 7.4,6.2 H5.6 Z M5.6,3.6 H8"/><path d="M13.1,1.6 Q12.8,1 11.7,1 Q10.2,1 10.2,2.4 V4.8 Q10.2,6.2 11.7,6.2 Q12.8,6.2 13.1,5.6"/></g></svg>
<div class="t" style="left:1065.8px;top:440.5px;font-size:11px;letter-spacing:-0.33px;color:#333;line-height:11px">City</div>
<svg style="left:1136.5px;top:441.5px" width="12" height="10" viewBox="0 0 12 10"><path d="M3,0.5 V8.5 M0.8,6.3 L3,8.8 L5.2,6.3" fill="none" stroke="#bdbdbd" stroke-width="1.35"/><path d="M8.8,9.5 V1.5 M6.6,3.7 L8.8,1.2 L11,3.7" fill="none" stroke="#bdbdbd" stroke-width="1.35"/></svg>
<svg style="left:1163.5px;top:442px" width="14" height="7" viewBox="0 0 14 7"><g fill="none" stroke="#3a8fd1" stroke-width="1.5"><path d="M1,6.2 V2.4 Q1,1 2.4,1 Q3.8,1 3.8,2.4 V6.2 M1,4 H3.8"/><path d="M5.6,1 H7.4 Q8.7,1 8.7,2.3 V4.9 Q8.7,6.2 7.4,6.2 H5.6 Z M5.6,3.6 H8"/><path d="M13.1,1.6 Q12.8,1 11.7,1 Q10.2,1 10.2,2.4 V4.8 Q10.2,6.2 11.7,6.2 Q12.8,6.2 13.1,5.6"/></g></svg>
<div class="a" style="left:0;top:0;width:1165.8px;height:634px;overflow:hidden"><div class="cell" style="left:221.0px;top:462.50px">1</div><div class="cell" style="left:269.5px;top:462.50px">1</div><div class="cell" style="left:377.7px;top:462.50px">Luís</div><div class="cell" style="left:479.2px;top:462.50px">Gonçalves</div><div class="cell" style="left:580.3px;top:462.50px">Embraer - Empresa Brasileira de Aeronáutica S.A.</div><div class="cell" style="left:824.5px;top:462.50px">Av. Brigadeiro Faria Lima, 2170</div><div class="cell" style="left:1045.8px;top:462.50px">São José dos Campos</div><div class="cell" style="left:1163.5px;top:462.50px">SP</div><div class="cell" style="left:221.0px;top:482.90px">2</div><div class="cell" style="left:269.5px;top:482.90px">2</div><div class="cell" style="left:377.7px;top:482.90px">Leonie</div><div class="cell" style="left:479.2px;top:482.90px">Köhler</div><div class="cell null" style="left:580.3px;top:482.90px">[NULL]</div><div class="cell" style="left:824.5px;top:482.90px">Theodor-Heuss-Straße 34</div><div class="cell" style="left:1045.8px;top:482.90px">Stuttgart</div><div class="cell null" style="left:1163.5px;top:482.90px">[NULL]</div><div class="cell" style="left:221.0px;top:503.30px">3</div><div class="cell" style="left:269.5px;top:503.30px">3</div><div class="cell" style="left:377.7px;top:503.30px">François</div><div class="cell" style="left:479.2px;top:503.30px">Tremblay</div><div class="cell null" style="left:580.3px;top:503.30px">[NULL]</div><div class="cell" style="left:824.5px;top:503.30px">1498 rue Bélanger</div><div class="cell" style="left:1045.8px;top:503.30px">Montréal</div><div class="cell" style="left:1163.5px;top:503.30px">QC</div><div class="cell" style="left:221.0px;top:523.70px">4</div><div class="cell" style="left:269.5px;top:523.70px">4</div><div class="cell" style="left:377.7px;top:523.70px">Bjørn</div><div class="cell" style="left:479.2px;top:523.70px">Hansen</div><div class="cell null" style="left:580.3px;top:523.70px">[NULL]</div><div class="cell" style="left:824.5px;top:523.70px">Ullevålsveien 14</div><div class="cell" style="left:1045.8px;top:523.70px">Oslo</div><div class="cell null" style="left:1163.5px;top:523.70px">[NULL]</div><div class="cell" style="left:221.0px;top:544.10px">5</div><div class="cell" style="left:269.5px;top:544.10px">5</div><div class="cell" style="left:377.7px;top:544.10px">František</div><div class="cell" style="left:479.2px;top:544.10px">Wichterlová</div><div class="cell" style="left:580.3px;top:544.10px">JetBrains s.r.o.</div><div class="cell" style="left:824.5px;top:544.10px">Klanova 9/506</div><div class="cell" style="left:1045.8px;top:544.10px">Prague</div><div class="cell null" style="left:1163.5px;top:544.10px">[NULL]</div><div class="cell" style="left:221.0px;top:564.50px">6</div><div class="cell" style="left:269.5px;top:564.50px">6</div><div class="cell" style="left:377.7px;top:564.50px">Helena</div><div class="cell" style="left:479.2px;top:564.50px">Holý</div><div class="cell null" style="left:580.3px;top:564.50px">[NULL]</div><div class="cell" style="left:824.5px;top:564.50px">Rilská 3174/6</div><div class="cell" style="left:1045.8px;top:564.50px">Prague</div><div class="cell null" style="left:1163.5px;top:564.50px">[NULL]</div><div class="cell" style="left:221.0px;top:584.90px">7</div><div class="cell" style="left:269.5px;top:584.90px">7</div><div class="cell" style="left:377.7px;top:584.90px">Astrid</div><div class="cell" style="left:479.2px;top:584.90px">Gruber</div><div class="cell null" style="left:580.3px;top:584.90px">[NULL]</div><div class="cell" style="left:824.5px;top:584.90px">Rotenturmstraße 4, 1010 Innere Stadt</div><div class="cell" style="left:1045.8px;top:584.90px">Vienne</div><div class="cell null" style="left:1163.5px;top:584.90px">[NULL]</div><div class="cell" style="left:221.0px;top:605.30px">8</div><div class="cell" style="left:269.5px;top:605.30px">8</div><div class="cell" style="left:377.7px;top:605.30px">Daan</div><div class="cell" style="left:479.2px;top:605.30px">Peeters</div><div class="cell null" style="left:580.3px;top:605.30px">[NULL]</div><div class="cell" style="left:824.5px;top:605.30px">Grétrystraat 63</div><div class="cell" style="left:1045.8px;top:605.30px">Brussels</div><div class="cell null" style="left:1163.5px;top:605.30px">[NULL]</div><div class="cell" style="left:221.0px;top:625.70px">9</div><div class="cell" style="left:269.5px;top:625.70px">9</div><div class="cell" style="left:377.7px;top:625.70px">Kara</div><div class="cell" style="left:479.2px;top:625.70px">Nielsen</div><div class="cell null" style="left:580.3px;top:625.70px">[NULL]</div><div class="cell" style="left:824.5px;top:625.70px">Sønder Boulevard 51</div><div class="cell" style="left:1045.8px;top:625.70px">Copenhagen</div><div class="cell null" style="left:1163.5px;top:625.70px">[NULL]</div></div>
<div class="a" style="left:1165.8px;top:398px;width:36.2px;height:236px;background:#f2f2f2"></div>
<div class="t" style="left:1164px;top:451px;width:38px;font-size:11px;letter-spacing:-0.3px;color:#333;line-height:11px;transform:rotate(-90deg);text-align:center">VALUE</div>
<svg style="left:1177px;top:484px" width="8" height="7" viewBox="0 0 8 7"><rect x="0" y="0" width="6.8" height="6.8" fill="#2a84c6"/><rect x="2.5" y="1" width="3.5" height="5" fill="#8ec2ec"/></svg>
<div class="t" style="left:1147px;top:529px;width:72px;font-size:11px;letter-spacing:-0.3px;color:#333;line-height:11px;transform:rotate(-90deg);text-align:center">GROUPING</div>
<svg style="left:1176px;top:568px" width="14" height="14" viewBox="0 0 14 14"><circle cx="6.6" cy="6.8" r="5.8" fill="none" stroke="#4a98d8" stroke-width="1.1"/><circle cx="4.8" cy="5" r="1" fill="#4a98d8"/><circle cx="8.4" cy="5" r="1" fill="#4a98d8"/><circle cx="4.8" cy="8.6" r="1" fill="#4a98d8"/><circle cx="8.4" cy="8.6" r="1" fill="#4a98d8"/></svg><!--/RESULTS-->
<!--TOOLBAR--><!-- refresh -->
<svg style="left:219px;top:639.5px" width="16" height="14" viewBox="0 0 16 14">
 <path d="M9.11,13.21 A5.8,5.8 0 1 1 13.36,9.95" fill="none" stroke="#666" stroke-width="1.4"/><path d="M12.51,11.76 L15.42,10.25 L11.80,8.56 Z" fill="#666"/>
</svg>
<svg style="left:236.5px;top:644.3px" width="7" height="4" viewBox="0 0 7 4"><path d="M0.7,0.6 L3.4,3.2 L6.1,0.6" fill="none" stroke="#555" stroke-width="1.3"/></svg>
<div class="a" style="left:255.5px;top:637px;width:64px;height:19.5px;background:#fff;border:1px solid #dcdcdc;border-radius:2px"></div>
<div class="t" style="left:262px;top:642px;font-size:11px;color:#333;line-height:11px">200</div>
<div class="a" style="left:298.5px;top:639.5px;width:14.5px;height:14px;background:#e6e6e6"></div>
<svg style="left:302px;top:641px" width="8" height="11" viewBox="0 0 8 11"><path d="M1,3.6 L4,0.9 L7,3.6 M1,7.4 L4,10.1 L7,7.4" fill="none" stroke="#999" stroke-width="0.9"/></svg>
<!-- fetch all -->
<svg style="left:330px;top:640.5px" width="14" height="13" viewBox="0 0 14 13">
 <path d="M0.8,1.2 C3,1.2 4.5,2 6.7,4 C8.9,2 10.4,1.2 12.6,1.2" fill="none" stroke="#3d8fd6" stroke-width="1.3"/>
 <path d="M6.7,3.5 V8" stroke="#3d8fd6" stroke-width="1.2"/><path d="M4.8,6.6 L6.7,8.8 L8.6,6.6 Z" fill="#3d8fd6"/>
 <path d="M1,7.5 V11.6 H12.4 V7.5" fill="none" stroke="#3d8fd6" stroke-width="1.4"/>
</svg>
<div class="t" style="left:346.5px;top:643px;font-size:10.5px;font-weight:bold;color:#666;line-height:10px;letter-spacing:-0.2px">59</div>
<!-- add row -->
<svg style="left:371px;top:641.5px" width="14" height="13" viewBox="0 0 14 13">
 <path d="M0.5,1.8 H12 M0.5,5.2 H9 M0.5,8.6 H6" stroke="#2a84c6" stroke-width="1.3"/>
 <path d="M10,6.4 V11.8 M7.3,9.1 H12.7" stroke="#4cb02a" stroke-width="1.8"/>
</svg>
<!-- dup row (disabled) -->
<svg style="left:397px;top:641.5px" width="14" height="13" viewBox="0 0 14 13" opacity="0.55">
 <path d="M0.5,1.8 H11.5 M0.5,5.2 H7 M0.5,8.6 H5" stroke="#2a84c6" stroke-width="1.2"/>
 <path d="M8,5.8 Q6.8,5.8 6.8,9 Q6.8,12.2 8,12.2 M12,5.8 Q13.2,5.8 13.2,9 Q13.2,12.2 12,12.2" fill="none" stroke="#2a84c6" stroke-width="0.9"/>
 <path d="M10,7.2 V11 M8.1,9.1 H11.9" stroke="#4cb02a" stroke-width="1"/>
</svg>
<!-- delete row (disabled) -->
<svg style="left:423.5px;top:641.5px" width="14" height="13" viewBox="0 0 14 13" opacity="0.55">
 <path d="M0.5,1.8 H11.5 M0.5,5.2 H8 M0.5,8.6 H5" stroke="#2a84c6" stroke-width="1.2"/>
 <path d="M6,9 H12.2" stroke="#e0333c" stroke-width="1.6"/>
</svg>
<!-- revert (disabled) -->
<svg style="left:449.5px;top:640.5px" width="14" height="14" viewBox="0 0 14 14" opacity="0.55">
 <path d="M5,1 H12.3 V7.5" fill="none" stroke="#2a84c6" stroke-width="0.9" stroke-dasharray="1.2 0.8"/>
 <path d="M1,4 H8.5 V12.8 H1 Z" fill="none" stroke="#2a84c6" stroke-width="1.3"/>
 <path d="M3,9.3 H10.5 Q12.5,9.3 12.5,7.6" fill="none" stroke="#2a84c6" stroke-width="1.1"/>
 <path d="M4.6,7.4 L2.6,9.3 L4.6,11.2 Z" fill="#2a84c6"/>
</svg>
<!-- save (disabled) -->
<svg style="left:475.5px;top:640.5px" width="13" height="13" viewBox="0 0 13 13" opacity="0.5">
 <path d="M3.8,10.3 H2.8 C1.5,10.3 0.6,9.2 0.6,8 C0.6,6.8 1.4,5.9 2.5,5.7 C2.6,3 4.4,1 6.5,1 C8.6,1 10.4,2.8 10.5,5.2 C11.7,5.3 12.5,6.4 12.5,7.7 C12.5,9.1 11.5,10.3 10.2,10.3 H9.2" fill="none" stroke="#4cb02a" stroke-width="1.2"/>
 <path d="M6.5,5.5 V12.7" stroke="#4cb02a" stroke-width="1.3"/><path d="M4.2,7.8 L6.5,5.1 L8.8,7.8 Z" fill="#4cb02a"/>
</svg>
<div class="tb" style="left:491.5px">SAVE</div>
<!-- cancel (disabled) -->
<svg style="left:529px;top:640.5px" width="14" height="14" viewBox="0 0 14 14" opacity="0.55">
 <path d="M4.5,1 H11.5 V5" fill="none" stroke="#2a84c6" stroke-width="0.9" stroke-dasharray="1.2 0.8"/>
 <path d="M1,3.8 H8.5 M1,3.8 V12.8 H7" fill="none" stroke="#2a84c6" stroke-width="1.3"/>
 <path d="M8.3,8 L12.6,12.5 M12.6,8 L8.3,12.5" stroke="#e0333c" stroke-width="1.3"/>
</svg>
<div class="tb" style="left:545.5px">CANCEL</div>
<!-- script (disabled) -->
<svg style="left:596px;top:640px" width="14" height="14" viewBox="0 0 14 14" opacity="0.55">
 <path d="M2.8,9.5 V1.2 H11 M9.6,1.2 V5.5" fill="none" stroke="#2a84c6" stroke-width="1.2"/>
 <rect x="0.6" y="11" width="5" height="1.8" fill="#2a84c6"/>
 <circle cx="8.6" cy="8.8" r="2.8" fill="none" stroke="#2a84c6" stroke-width="1.2"/>
 <path d="M10.6,10.8 L12.8,13" stroke="#2a84c6" stroke-width="1.4"/>
</svg>
<div class="tb" style="left:612px">SCRIPT</div>
<!-- export -->
<svg style="left:662.5px;top:641px" width="12" height="13" viewBox="0 0 12 13">
 <path d="M0.6,1.2 H11" stroke="#3d8fd6" stroke-width="1.3"/>
 <path d="M5.8,5 V11.8" stroke="#3d8fd6" stroke-width="1.3"/>
 <path d="M2.8,6.8 L5.8,3.6 L8.8,6.8 Z" fill="#3d8fd6"/>
</svg>
<div class="tb" style="left:681.5px;color:#555">EXPORT</div>
<div class="t" style="left:1109px;top:643px;font-size:10.2px;color:#888;line-height:10px">Success - 31ms</div>
<!--/TOOLBAR-->
<div class="a" style="left:2px;top:40px;width:1200px;height:1px;background:rgba(42,124,180,0.28)"></div>
</div></body></html>
